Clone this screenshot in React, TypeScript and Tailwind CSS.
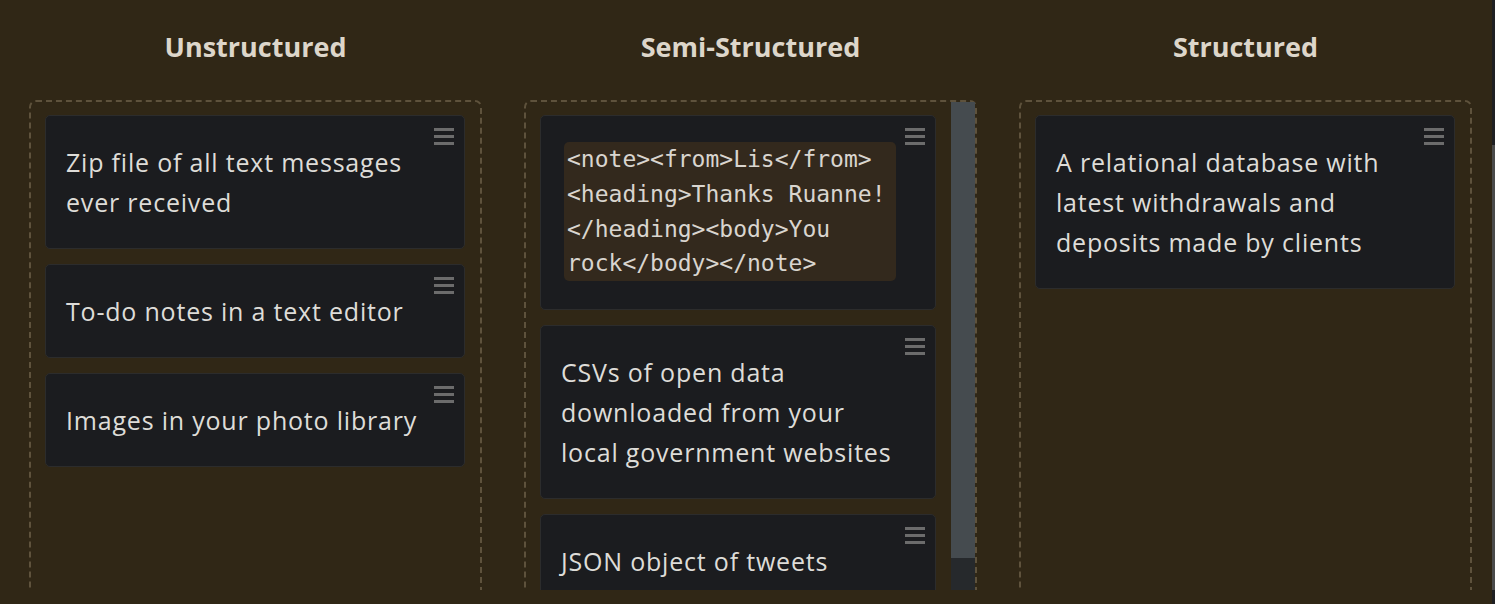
import React from "react";

type Card = { lines?: string[]; code?: string[] };

const COLUMNS: { title: string; cards: Card[]; scroll?: boolean }[] = [
    {
        title: "Unstructured",
        cards: [
            { lines: ["Zip file of all text messages", "ever received"] },
            { lines: ["To-do notes in a text editor"] },
            { lines: ["Images in your photo library"] },
        ],
    },
    {
        title: "Semi-Structured",
        scroll: true,
        cards: [
            {
                code: [
                    "<note><from>Lis</from>",
                    "<heading>Thanks Ruanne!",
                    "</heading><body>You",
                    "rock</body></note>",
                ],
            },
            { lines: ["CSVs of open data", "downloaded from your", "local government websites"] },
            { lines: ["JSON object of tweets", "pulled from the Twitter API"] },
        ],
    },
    {
        title: "Structured",
        cards: [{ lines: ["A relational database with", "latest withdrawals and", "deposits made by clients"] }],
    },
];

function Handle() {
    return (
        <div className="absolute right-[10px] top-[12px] flex w-[20px] flex-col gap-[4px]">
            <div className="h-[3px] bg-[#6c6c6c]" />
            <div className="h-[3px] bg-[#6c6c6c]" />
            <div className="h-[3px] bg-[#6c6c6c]" />
        </div>
    );
}

function CardItem({ card }: { card: Card }) {
    return (
        <div className="relative shrink-0 rounded-[5px] border border-[#2c2c2c] bg-[#1b1c1f] px-[20px] py-[26px]">
            <Handle />
            {card.code ? (
                <div className="mb-[2px] ml-[3px] mr-[19px] rounded-[5px] bg-[#33291d] px-[3px] font-['DejaVu_Sans_Mono',monospace] text-[23px] leading-[34.75px] text-[#d9d5cf]">
                    {card.code.map((l) => (
                        <div key={l} className="whitespace-pre">
                            {l}
                        </div>
                    ))}
                </div>
            ) : (
                <div className="font-['Open_Sans',sans-serif] text-[25px] leading-[40px] tracking-[0.8px] text-[#dedcd8]">
                    {card.lines?.map((l) => (
                        <div key={l} className="whitespace-nowrap">
                            {l}
                        </div>
                    ))}
                </div>
            )}
        </div>
    );
}

export default function App() {
    return (
        <div className="relative h-[604px] w-full overflow-hidden bg-[#302716]">
            <div className="h-[590px] overflow-hidden pl-[29px] pr-[23px]">
                <div className="grid grid-cols-3 gap-[42px]">
                    {COLUMNS.map((col) => (
                        <div key={col.title} className="flex flex-col">
                            <div className="flex h-[100px] items-center justify-center pb-[6px]">
                                <h2 className="font-['Open_Sans',sans-serif] text-[27px] font-bold text-[#ddd6ca]">
                                    {col.title}
                                </h2>
                            </div>
                            <div className="flex h-[520px] rounded-[7px] border-2 border-dashed border-[#5e523c]">
                                <div className="flex min-w-0 flex-1 flex-col gap-[15px] pl-[14px] pr-[15px] pt-[13px]">
                                    {col.cards.map((c, i) => (
                                        <CardItem key={i} card={c} />
                                    ))}
                                </div>
                                {col.scroll && (
                                    <div className="flex w-[24px] shrink-0 flex-col">
                                        <div className="h-[456px] bg-[#454b4f]" />
                                        <div className="flex-1 bg-[#26292c]" />
                                    </div>
                                )}
                            </div>
                        </div>
                    ))}
                </div>
            </div>
            {/* page scrollbar */}
            <div className="absolute right-0 top-0 flex h-full w-[3px] flex-col">
                <div className="h-[145px] bg-[#1f2023]" />
                <div className="h-[445px] bg-[#4a4a4a]" />
                <div className="flex-1 bg-[#1f2023]" />
            </div>
        </div>
    );
}
